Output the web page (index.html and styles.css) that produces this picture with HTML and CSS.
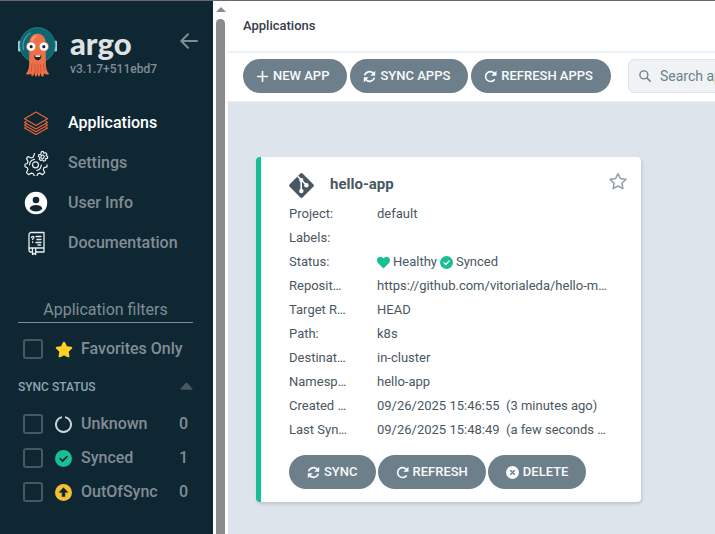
FILE: index.html
```html
<!DOCTYPE html>
<html lang="en">
<head>
<meta charset="utf-8">
<meta name="viewport" content="width=device-width, initial-scale=1">
<title>Applications - Argo CD</title>
<link rel="stylesheet" href="styles.css">
</head>
<body>
<svg class="defs" aria-hidden="true">
  <symbol id="sync" viewBox="0 0 16 16">
    <path d="M2 6.6A6.2 6.2 0 0 1 12.6 4.2M14 9.4A6.2 6.2 0 0 1 3.4 11.8" fill="none" stroke="currentColor" stroke-width="2"/>
    <path d="M15 1v6H9zM1 15V9h6z" fill="currentColor"/>
  </symbol>
  <symbol id="refresh" viewBox="0 0 16 16">
    <path d="M12.9 4.3A6.1 6.1 0 1 0 12.6 12.2" fill="none" stroke="currentColor" stroke-width="2" stroke-linecap="round"/>
    <path d="M15.4 .8v6.4H9z" fill="currentColor"/>
  </symbol>
  <symbol id="star" viewBox="0 0 576 512">
    <path d="M316.9 18C311.6 7 300.4 0 288.1 0s-23.4 7-28.8 18L195 150.3 51.4 171.5c-12 1.8-22 10.2-25.7 21.7s-.7 24.2 7.9 32.7L137.8 329 113.2 474.7c-2 12 3 24.2 12.9 31.3s23 8 33.8 2.3l128.3-68.5 128.3 68.5c10.8 5.7 23.9 4.9 33.8-2.3s14.9-19.3 12.9-31.3L438.5 329 542.7 225.9c8.6-8.5 11.7-21.2 7.9-32.7s-13.7-19.9-25.7-21.7L381.2 150.3 316.9 18z"/>
  </symbol>
  <symbol id="check" viewBox="0 0 16 16">
    <circle cx="8" cy="8" r="8" fill="#18be94"/>
    <path d="M4.9 8.2l2.2 2.2 4.1-4.2" fill="none" stroke="currentColor" stroke-width="1.6" stroke-linecap="round" stroke-linejoin="round"/>
  </symbol>
</svg>
<div class="layout">
  <aside class="sidebar">
    <div class="brand">
      <svg class="mascot" viewBox="0 0 40 52" aria-hidden="true">
        <rect x="0" y="15" width="3" height="11" rx="1" fill="#a9cde0"/>
        <rect x="37" y="15" width="3" height="11" rx="1" fill="#a9cde0"/>
        <circle cx="20" cy="19.500" r="18" fill="#0d6670" stroke="#1c7c85"/>
        <path d="M5.500 24a15.500 15.500 0 0 1 7-17" fill="none" stroke="#459da3" stroke-width="1.300" stroke-linecap="round"/>
        <path d="M11.500 37V17a8.500 9.500 0 0 1 17 0v20c0 5 .5 9 3.500 12-2.500 1-4 .5-5.500-1 .2 2 .2 3-1.300 4-1.700-1-2-3-2-5-.5 2-.5 4-1.700 5-1.300-1-1.500-3-1.500-5 0 2-.5 4-1.700 5-1.300-1-1.300-3-1.300-5-.5 2-1 4-2.500 4.500-1-.8-1-1.500-.8-3-1.500 1-3.200 1.500-5.700.500 3-3 3.500-7 3.500-12z" fill="#ef7048"/>
        <path d="M14.500 38l-1 9M17.500 39v9M20.500 39v9M23.300 39l.4 8M26 38l1 8" fill="none" stroke="#b84a34" stroke-width=".7"/>
        <path d="M14.500 15a6 6 0 0 1 3.500-4.500" fill="none" stroke="#ff9b74" stroke-width="2" stroke-linecap="round"/>
        <circle cx="13.500" cy="21" r="4.800" fill="#fff" stroke="#d55a3b" stroke-width=".7"/>
        <circle cx="26.500" cy="21" r="4.800" fill="#fff" stroke="#d55a3b" stroke-width=".7"/>
        <circle cx="13.500" cy="21" r="1.600" fill="#17222b"/>
        <circle cx="26.500" cy="21" r="1.600" fill="#17222b"/>
        <path d="M16.500 30h7.500c0 3-1.500 5-3.700 5s-3.800-2-3.800-5z" fill="#17222b"/>
        <path d="M17.800 30h5v1.500h-5z" fill="#fff"/>
      </svg>
      <div class="brand-text">
        <span class="wordmark">argo</span>
        <span class="version">v3.1.7+511ebd7</span>
      </div>
      <button class="collapse" type="button" aria-label="Collapse sidebar">
        <svg viewBox="0 0 18 16"><path d="M17 8H1.500M8 1.200L1.300 8 8 14.800" fill="none" stroke="currentColor" stroke-width="2" stroke-linecap="round" stroke-linejoin="round"/></svg>
      </button>
    </div>
    <nav class="nav">
      <a class="active" href="#">
        <svg viewBox="0 0 26 26" fill="none" stroke="#e9673a" stroke-width="1.100" stroke-linejoin="round"><path d="M13 2L24.500 8.700 13 15.500 1.500 8.700zM3.500 11.200L1.500 12.500 13 19l11.500-6.500-2-1.300M3.500 13.900L1.500 15.200 13 21.700l11.500-6.500-2-1.300M3.500 16.600L1.500 17.900 13 24.400l11.500-6.500-2-1.300"/></svg>
        <span>Applications</span></a>
      <a href="#">
        <svg viewBox="0 0 26 26" fill="none" stroke="#e8eef1" stroke-width="1.200" stroke-linejoin="round" stroke-linecap="round">
          <path d="M11.500 3.500l-1.300 3.700-2 .8-3-1.500-1.700 2 1.500 3-.8 2-2.200.8v2.500l2.200.8.800 2-1.500 3 2 2 3-1.500 2 .8.800 2.400h2.600l.8-2.400 2-.8 3 1.500 2-2-1.500-3 .8-2 3-.8v-2"/>
          <circle cx="12.500" cy="14.800" r="3"/><path d="M11.500 9.300a6 6 0 0 0-5 5.500M18.300 15a6 6 0 0 1-4.500 5.500"/>
          <circle cx="19.500" cy="6.800" r="1.700"/>
          <path d="M18.500 1.600h2l.4 1.700 1.700-.6 1.300 1.500-.9 1.500 1.700.8-.3 2-1.800.2-.1 1.800-2 .7-1.100-1.500-1.600.8-1.500-1.300.7-1.700-1.600-.9.400-2 1.900-.1z"/>
        </svg>
        <span>Settings</span></a>
      <a href="#">
        <svg viewBox="0 0 26 26"><circle cx="13" cy="13" r="11.200" fill="#fff"/><circle cx="13" cy="10" r="3.300" fill="#0f2733"/><path d="M6.600 18.500c1-2.600 3.500-3.500 6.400-3.500s5.400.9 6.400 3.500c-1.200 2-3.600 3-6.400 3s-5.200-1-6.400-3z" fill="#0f2733"/></svg>
        <span>User Info</span></a>
      <a href="#">
        <svg viewBox="0 0 26 26" fill="none" stroke="#e8eef1" stroke-width="1.300" stroke-linejoin="round" stroke-linecap="round">
          <path d="M9.500 22H8a2 2 0 0 1-2-2V4.500a2 2 0 0 1 2-2h13V22h-8.500M6 20a2 2 0 0 1 2-2h13M9.500 18v6.500l1.600-1.200 1.600 1.200V18"/>
          <path d="M13 6.500h5M14 9.500h4M13 12.500h5M15 15h2.500M8.600 7.500c0-1.500 2.400-1.500 2.200 0 0 1-1.200 1-1.200 2M9.600 12v.4"/>
        </svg>
        <span>Documentation</span></a>
    </nav>
    <section class="filters">
      <h2>Application filters</h2>
      <label class="filter favorite"><input type="checkbox"><svg class="gold" viewBox="0 0 576 512"><use href="#star"/></svg><span>Favorites Only</span></label>
      <button class="group" type="button"><span>SYNC STATUS</span><svg viewBox="0 0 14 8"><path d="M6 .8a1.500 1.500 0 0 1 2 0L13.500 7q.3 1-.8 1H1.300Q.2 8 .5 7z" fill="currentColor"/></svg></button>
      <label class="filter"><input type="checkbox"><svg viewBox="0 0 16 16"><path d="M9.500 1.100a7.050 7.050 0 1 1-3 0" fill="none" stroke="#ccd6dd" stroke-width="1.800"/></svg><span>Unknown</span><b>0</b></label>
      <label class="filter"><input type="checkbox"><svg class="on-dark" viewBox="0 0 16 16"><use href="#check"/></svg><span>Synced</span><b>1</b></label>
      <label class="filter"><input type="checkbox"><svg viewBox="0 0 16 16"><circle cx="8" cy="8" r="8" fill="#f4c030"/><path d="M8 3.500l4 4.300H9.300v4H6.700v-4H4z" fill="#0f2733" stroke="#0f2733" stroke-width=".6" stroke-linejoin="round"/></svg><span>OutOfSync</span><b>0</b></label>
    </section>
  </aside>
  <div class="scrollbar" aria-hidden="true"><i class="up"></i><i class="thumb"></i></div>
  <div class="page">
    <header class="topbar"><h1>Applications</h1></header>
    <div class="toolbar">
      <div class="actions">
        <button class="btn" type="button"><svg viewBox="0 0 16 16"><path d="M8 2v12M2 8h12" stroke="currentColor" stroke-width="2" stroke-linecap="round"/></svg>NEW APP</button>
        <button class="btn" type="button"><svg viewBox="0 0 16 16"><use href="#sync"/></svg>SYNC APPS</button>
        <button class="btn" type="button"><svg viewBox="0 0 16 16"><use href="#refresh"/></svg>REFRESH APPS</button>
      </div>
      <label class="search">
        <svg viewBox="0 0 16 16"><path d="M10.800 10.800L15 15" stroke="currentColor" stroke-width="2" stroke-linecap="round"/><circle cx="6.500" cy="6.500" r="5.300" fill="none" stroke="currentColor" stroke-width="1.800"/></svg>
        <input type="text" placeholder="Search applications..." aria-label="Search applications">
      </label>
    </div>
    <main class="content">
      <article class="card">
        <header class="card-head">
          <svg class="git" viewBox="0 0 24 24"><path d="M10.700.7a1.900 1.900 0 0 1 2.600 0l10 10a1.900 1.900 0 0 1 0 2.600l-10 10a1.900 1.900 0 0 1-2.600 0l-10-10a1.900 1.900 0 0 1 0-2.600z" fill="#495763"/><path d="M8.300 3.100L11.700 6.500V17M12 6.700L16.500 11.500" fill="none" stroke="#fff" stroke-width="1.500"/><circle cx="11.800" cy="6.800" r="2" fill="#fff"/><circle cx="16.700" cy="11.800" r="2.100" fill="#fff"/><circle cx="11.800" cy="17.300" r="2.100" fill="#fff"/></svg>
          <h2>hello-app</h2>
          <button class="fav" type="button" aria-label="Add to favorites"><svg viewBox="0 -20 576 552"><path d="M288 22l77 157 174 25-126 122 30 173-155-82-155 82 30-173L37 204l174-25z" fill="none" stroke="currentColor" stroke-width="50" stroke-linejoin="round"/></svg></button>
        </header>
        <dl class="details">
          <dt>Project:</dt><dd>default</dd>
          <dt>Labels:</dt><dd></dd>
          <dt>Status:</dt><dd class="status"><svg viewBox="0 20 512 470"><path fill="#18be94" d="M462.300 62.600C407.500 15.900 326 24.300 275.700 76.200L256 96.500l-19.700-20.300C186.100 24.300 104.500 15.900 49.700 62.600c-62.800 53.600-66.100 149.800-9.900 207.900l193.500 199.800c12.500 12.900 32.800 12.900 45.300 0l193.500-199.800c56.300-58.100 53-154.300-9.800-207.900z"/></svg><span>Healthy</span><svg class="on-green" viewBox="0 0 16 16"><use href="#check"/></svg><span>Synced</span></dd>
          <dt>Repository:</dt><dd>https://github.com/vitorialeda/hello-manifests</dd>
          <dt>Target Revision:</dt><dd>HEAD</dd>
          <dt>Path:</dt><dd>k8s</dd>
          <dt>Destination:</dt><dd>in-cluster</dd>
          <dt>Namespace:</dt><dd>hello-app</dd>
          <dt>Created At:</dt><dd>09/26/2025 15:46:55 &nbsp;(3 minutes ago)</dd>
          <dt>Last Sync:</dt><dd>09/26/2025 15:48:49 &nbsp;(a few seconds ago)</dd>
        </dl>
        <footer class="card-actions">
          <button class="btn" type="button"><svg viewBox="0 0 16 16"><use href="#sync"/></svg>SYNC</button>
          <button class="btn" type="button"><svg viewBox="0 0 16 16"><use href="#refresh"/></svg>REFRESH</button>
          <button class="btn" type="button"><svg viewBox="0 0 16 16"><circle cx="8" cy="8" r="8" fill="currentColor"/><path d="M5.900 5.900l4.200 4.200M10.100 5.900l-4.200 4.200" stroke="#6d7f8b" stroke-width="1.900" stroke-linecap="round"/></svg>DELETE</button>
        </footer>
      </article>
    </main>
  </div>
</div>
</body>
</html>
```
FILE: styles.css
```css
* { box-sizing: border-box; }
body { margin: 0; font: 14px/24px Roboto, "Liberation Sans", sans-serif; color: #495763; background: #dee6eb; overflow: hidden; }
h1, h2, dl, dd { margin: 0; }
button, input { font: inherit; }
button { border: 0; padding: 0; background: none; cursor: pointer; }
svg { flex: none; }
.defs { position: absolute; width: 0; height: 0; }

.layout { display: flex; min-height: 100vh; border-top: 1px solid #69696b; }

.sidebar { flex: none; width: 213px; padding: 24px 20px 24px 18px; background: #0f2733; color: #818d94; }
.brand { display: flex; align-items: flex-start; height: 78px; }
.mascot { width: 39px; height: 53px; }
.brand-text { flex: 1; display: flex; flex-direction: column; padding-left: 13px; }
.wordmark { font: 900 31px/36px Lato, sans-serif; color: #dee2e2; }
.version { font-size: 12px; line-height: 16px; font-weight: 500; }
.collapse { width: 18px; height: 32px; margin-right: -5px; color: #818d94; }
.collapse svg { display: block; width: 18px; height: 16px; }

.nav a { display: flex; align-items: center; gap: 19px; height: 40px; padding-left: 5px; color: #818d94; text-decoration: none; font-size: 16px; font-weight: 500; }
.nav svg { width: 26px; height: 26px; }
.nav .active { color: #fff; }

.filters { padding-top: 35px; }
.filters h2 { height: 25px; border-bottom: 1px solid #818d94; text-align: center; font-size: 16px; font-weight: 400; line-height: 24px; }
.filter { display: flex; align-items: center; height: 34px; padding: 0 5px; font-size: 16px; font-weight: 500; }
.filter.favorite { height: 52px; }
.filter input { appearance: none; width: 20px; height: 20px; margin: 0 12px 0 0; border: 2px solid #495763; border-radius: 3px; }
.filter svg { width: 17px; height: 17px; margin-right: 9px; }
.filter .gold { width: 18px; margin-right: 8px; fill: #ffce25; }
.filter span { flex: 1; }
.filter b { font-weight: 500; }
.group { display: flex; width: 100%; height: 32px; justify-content: space-between; color: #8fa4b1; font-size: 12px; font-weight: 500; }
.group svg { width: 13px; height: 8px; margin-top: 7px; color: #495763; }
.on-dark { color: #0f2733; }
.on-green { color: #fff; }

.scrollbar { flex: none; display: flex; flex-direction: column; align-items: center; width: 15px; background: #fcfcfc; }
.up { margin: 6px 0 7px; border: 5px solid transparent; border-top: 0; border-bottom-color: #8b8b8b; }
.thumb { flex: 1; width: 9px; border-radius: 5px 5px 0 0; background: #8b8b8b; }

.page { flex: 1; min-width: 0; display: flex; flex-direction: column; }
.topbar { height: 52px; padding: 13px 15px; border-bottom: 2px solid #ebf0f4; background: #fff; }
.topbar h1 { font-size: 13px; font-weight: 500; color: #363c4a; }
.toolbar { display: flex; align-items: flex-start; gap: 17px; height: 49px; padding: 6px 15px; border-bottom: 1px solid #ebf0f4; background: #fff; overflow: hidden; }
.actions, .card-actions { display: flex; flex: none; gap: 2px; }
.actions { gap: 3px; }
.btn { display: flex; align-items: center; gap: 4px; height: 34px; padding: 0 18px 0 13px; border-radius: 17px; background: #6d7f8b; color: #f8fafb; font-size: 13px; font-weight: 500; white-space: nowrap; }
.btn svg { width: 13px; height: 13px; }
.search { flex: none; display: flex; align-items: center; gap: 9px; width: 330px; height: 34px; padding: 0 10px; border: 1px solid #dee6eb; border-radius: 6px; background: #eff3f6; color: #6d7f8b; }
.search svg { width: 12px; height: 12px; }
.search input { flex: 1; min-width: 0; border: 0; outline: 0; padding: 0; background: none; color: inherit; }
.search input::placeholder { color: inherit; opacity: 1; }

.content { flex: 1; padding: 55px 28px 32px; background: #dee4eb; }
.card { max-width: 385px; padding: 12px 32px 13px 28px; border-left: 5px solid #18be94; border-radius: 4px; background: #fff; box-shadow: 1px 2px 3px #bcc5cd; }
.card-head { display: flex; align-items: flex-start; height: 33px; }
.git { width: 25px; height: 25px; margin: 4px 16px 0 0; }
.card h2 { flex: 1; padding-top: 3px; font-size: 15px; font-weight: 700; line-height: 24px; }
.fav { color: #8fa4b1; }
.fav svg { display: block; width: 18px; height: 24px; }
.card-head .fav { margin-right: -18px; }
.details { display: grid; grid-template-columns: 59px minmax(0, 1fr); column-gap: 29px; grid-auto-rows: 24px; font-size: 13px; }
.details dt, .details dd { overflow: hidden; white-space: nowrap; text-overflow: ellipsis; }
.status { display: flex; align-items: center; gap: 3px; }
.status svg { width: 13px; height: 13px; }
.card-actions { padding-top: 13px; }
.card-actions .btn { padding: 0 18px; }
```
